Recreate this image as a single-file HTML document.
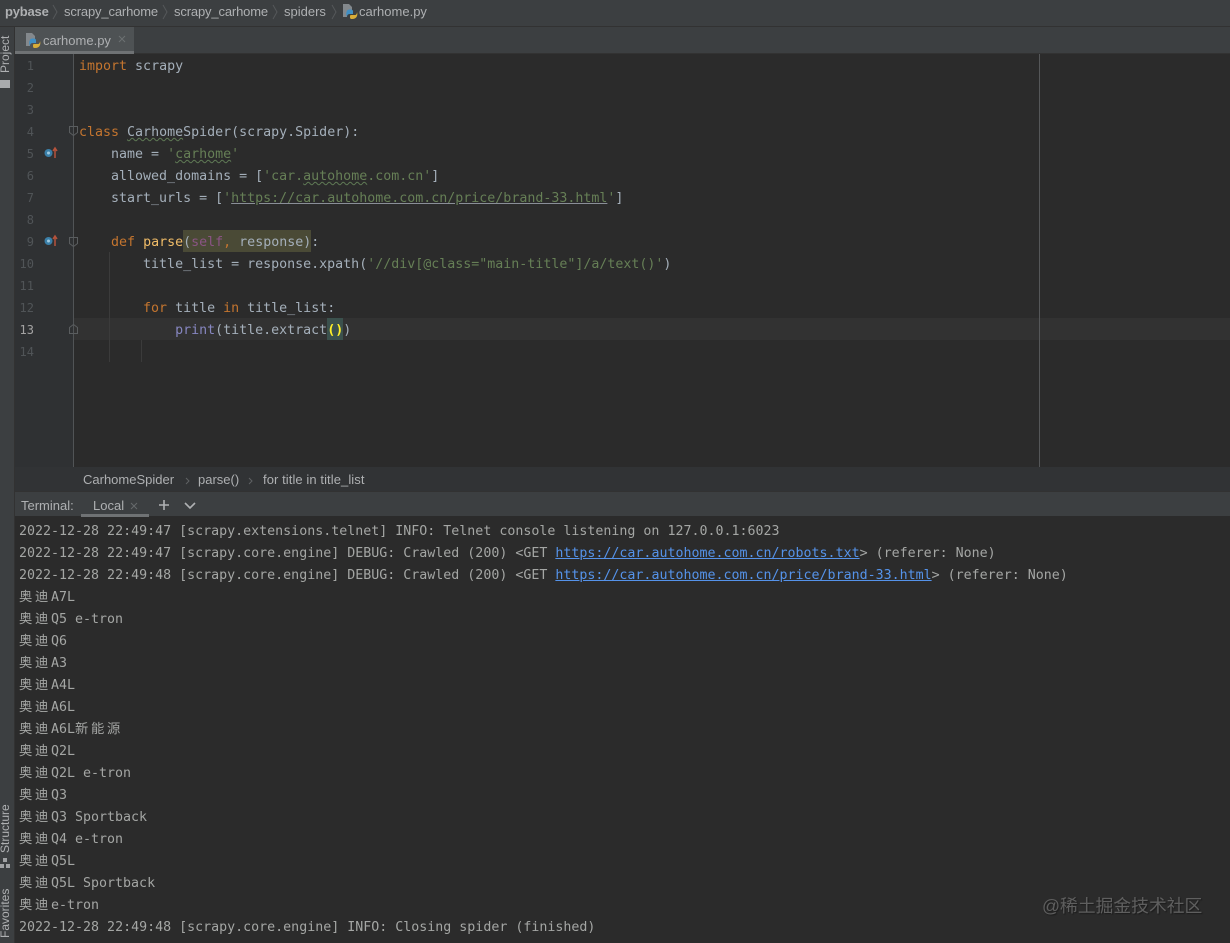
<!DOCTYPE html>
<html lang="zh"><head><meta charset="utf-8"><title>carhome.py</title>
<style>
html,body{margin:0;padding:0;background:#2b2b2b}
#p{position:relative;width:1230px;height:943px;overflow:hidden;background:#2b2b2b;font-family:"Liberation Sans","Noto Sans CJK SC",sans-serif;filter:blur(.3px)}
.a{position:absolute}
.t{position:absolute;font-size:13px;line-height:16px;color:#aeb0b2;white-space:nowrap}
.c,.m{position:absolute;margin-top:2px;font-family:"DejaVu Sans Mono","Noto Sans CJK SC",monospace;font-size:13.3px;line-height:22px;height:22px;white-space:pre;color:#a4afba}
.m{left:19px;color:#a4a6a4}
.n{position:absolute;width:20px;text-align:right;left:14px;font-family:"DejaVu Sans Mono",monospace;font-size:12px;line-height:22px;color:#505457}
.k{color:#c4752f}.s{color:#667f56}.f{color:#f0bc68}.b{color:#8686c0}.g{color:#8a5484}
.u{text-decoration:underline;text-decoration-color:#8a8f98}
.w{text-decoration:underline wavy #5f7a55 1px}
.z{display:inline-block;width:16px;text-align:left}
.l{color:#5593ea;text-decoration:underline}
.v{position:absolute;font-size:12px;color:#aeb0b2;transform:rotate(-90deg);transform-origin:left top;white-space:nowrap;line-height:14px}
</style></head><body><div id="p">
<!-- top nav -->
<div class="a" style="left:0;top:0;width:1230px;height:26px;background:#3c3f41;border-bottom:1px solid #323232"></div>
<div class="t" style="left:5px;top:4px;font-weight:bold;letter-spacing:-.2px">pybase</div>
<div class="t" style="left:64px;top:4px;letter-spacing:-.15px">scrapy_carhome</div>
<div class="t" style="left:174px;top:4px;letter-spacing:-.15px">scrapy_carhome</div>
<div class="t" style="left:284px;top:4px">spiders</div>
<div class="t" style="left:359px;top:4px">carhome.py</div>
<svg class="a" style="left:0;top:0" width="345" height="26" fill="none" stroke="#55585a"><path d="M53 5l4 7-4 7M163 5l4 7-4 7M273 5l4 7-4 7M332 5l4 7-4 7"/></svg>
<svg class="a" style="left:342px;top:3px" width="16" height="17" viewBox="0 0 16 17"><path d="M1 1h6l3 3v4H5v6H1z" fill="#83888c"/><path d="M5 8c0-2 6-2 6 0v3H8c-2 0-3 1-3 3-1-2-1-5 0-6z" fill="#3f8fc4"/><path d="M15 9c1 3 0 7-5 7-2 0-2-1-2-3 0-1 1-1 2-1h3c1 0 2-1 2-3z" fill="#d8ad38"/></svg>
<!-- left strip -->
<div class="a" style="left:0;top:27px;width:14px;height:916px;background:#3c3f41;border-right:1px solid #323232"></div>
<div class="v" style="left:-2px;top:73px;">Project</div>
<div class="a" style="left:0;top:80px;width:10px;height:8px;background:#a9abad"></div>
<div class="v" style="left:-2px;top:853px">Structure</div>
<svg class="a" style="left:0;top:857px" width="10" height="12"><path d="M3 1h4v4H3zM0 7h4v4H0zM6 7h4v4H6z" fill="#a0a2a4"/></svg>
<div class="v" style="left:-2px;top:938px">Favorites</div>
<!-- tabs -->
<div class="a" style="left:15px;top:27px;width:1215px;height:26px;background:#3c3f41;border-bottom:1px solid #323232"></div>
<div class="a" style="left:15px;top:27px;width:119px;height:24px;background:#4e5254;border-bottom:3px solid #6f7274;box-sizing:content-box"></div>
<svg class="a" style="left:25px;top:32px" width="16" height="17" viewBox="0 0 16 17"><path d="M1 1h6l3 3v4H5v6H1z" fill="#83888c"/><path d="M5 8c0-2 6-2 6 0v3H8c-2 0-3 1-3 3-1-2-1-5 0-6z" fill="#3f8fc4"/><path d="M15 9c1 3 0 7-5 7-2 0-2-1-2-3 0-1 1-1 2-1h3c1 0 2-1 2-3z" fill="#d8ad38"/></svg>
<div class="t" style="left:43px;top:33px">carhome.py</div>
<svg class="a" style="left:118px;top:35px" width="8" height="8" stroke="#6c7072"><path d="M1 1l6 6M7 1l-6 6"/></svg>
<!-- gutter -->
<div class="a" style="left:15px;top:54px;width:58px;height:413px;background:#2f3133"></div>
<div class="a" style="left:73px;top:54px;width:1px;height:413px;background:#515456"></div>
<div class="a" style="left:74px;top:318px;width:1156px;height:22px;background:#323232"></div>
<div class="a" style="left:1039px;top:54px;width:1px;height:413px;background:#555759"></div>
<div class="a" style="left:109px;top:252px;width:1px;height:110px;background:#3b3b3b"></div>
<div class="a" style="left:141px;top:340px;width:1px;height:22px;background:#3b3b3b"></div>
<div class="a" style="left:183px;top:230px;width:128px;height:22px;background:#4a4a36"></div>
<div class="a" style="left:327px;top:318px;width:16px;height:22px;background:#3b514d"></div>
<div class="n" style="top:55px">1</div><div class="n" style="top:77px">2</div><div class="n" style="top:99px">3</div><div class="n" style="top:121px">4</div><div class="n" style="top:143px">5</div><div class="n" style="top:165px">6</div><div class="n" style="top:187px">7</div><div class="n" style="top:209px">8</div><div class="n" style="top:231px">9</div><div class="n" style="top:253px">10</div><div class="n" style="top:275px">11</div><div class="n" style="top:297px">12</div><div class="n" style="top:319px;color:#a4a3a3">13</div><div class="n" style="top:341px">14</div>
<svg class="a" style="left:40px;top:140px" width="40" height="205" fill="none">
<circle cx="8.500" cy="13" r="4" fill="#3a7fa8"/><circle cx="8.500" cy="13" r="1.500" fill="#9fc9df"/><path d="M15 9v9M13 11l2-3 2 3" stroke="#b5533c" stroke-width="1.500"/>
<circle cx="8.500" cy="101" r="4" fill="#3a7fa8"/><circle cx="8.500" cy="101" r="1.500" fill="#9fc9df"/><path d="M15 97v9M13 99l2-3 2 3" stroke="#b5533c" stroke-width="1.500"/>
<path d="M29.500 97.500h8v6l-4 3-4-3z" stroke="#5a5d5f"/>
<path d="M29.500 193.500h8v-6l-4-3-4 3z" stroke="#5a5d5f"/>
</svg>
<svg class="a" style="left:69px;top:126px" width="10" height="12" fill="none"><path d="M.5.500h8v6l-4 3-4-3z" stroke="#5a5d5f"/></svg>
<!-- code -->
<div class="c" style="left:79px;top:54px"><span class="k">import</span> scrapy</div>
<div class="c" style="left:79px;top:120px"><span class="k">class</span> <span class="w">Carhome</span>Spider(scrapy.Spider):</div>
<div class="c" style="left:79px;top:142px">    name = <span class="s">'<span class="w">carhome</span>'</span></div>
<div class="c" style="left:79px;top:164px">    allowed_domains = [<span class="s">'car.<span class="w">autohome</span>.com.cn'</span>]</div>
<div class="c" style="left:79px;top:186px">    start_urls = [<span class="s">'<span class="u">https://car.autohome.com.cn/price/brand-33.html</span>'</span>]</div>
<div class="c" style="left:79px;top:230px">    <span class="k">def</span> <span class="f">parse</span>(<span class="g">self</span><span class="k">,</span> response):</div>
<div class="c" style="left:79px;top:252px">        title_list = response.xpath(<span class="s">'//div[@class="main-title"]/a/text()'</span>)</div>
<div class="c" style="left:79px;top:296px">        <span class="k">for</span> title <span class="k">in</span> title_list:</div>
<div class="c" style="left:79px;top:318px">            <span class="b">print</span>(title.extract<span style="color:#ffef28;font-weight:bold">()</span>)</div>
<!-- breadcrumb -->
<div class="a" style="left:15px;top:467px;width:1215px;height:24px;background:#313335"></div>
<div class="t" style="left:83px;top:472px">CarhomeSpider</div>
<div class="t" style="left:198px;top:472px">parse()</div>
<div class="t" style="left:263px;top:472px;letter-spacing:.08px">for title in title_list</div>
<svg class="a" style="left:184px;top:476px" width="70" height="9" fill="none" stroke="#5f6264"><path d="M2 2l3 3-3 3M65 2l3 3-3 3"/></svg>
<!-- terminal bar -->
<div class="a" style="left:15px;top:491px;width:1215px;height:25px;background:#3c3f41;border-top:1px solid #323232;box-sizing:border-box"></div>
<div class="t" style="left:21px;top:498px">Terminal:</div>
<div class="t" style="left:93px;top:498px">Local</div>
<svg class="a" style="left:130px;top:502px" width="8" height="8" stroke="#66696b"><path d="M1 1l6 6M7 1l-6 6"/></svg>
<div class="a" style="left:81px;top:514px;width:68px;height:3px;background:#6f7274"></div>
<svg class="a" style="left:157px;top:498px" width="42" height="15" fill="none" stroke="#afb1b3" stroke-width="1.600"><path d="M7 2v10M2 7h10M28 5l5 5 5-5"/></svg>
<!-- terminal output -->
<div class="m" style="top:519px">2022-12-28 22:49:47 [scrapy.extensions.telnet] INFO: Telnet console listening on 127.0.0.1:6023</div>
<div class="m" style="top:541px">2022-12-28 22:49:47 [scrapy.core.engine] DEBUG: Crawled (200) &lt;GET <span class="l">https://car.autohome.com.cn/robots.txt</span>&gt; (referer: None)</div>
<div class="m" style="top:563px">2022-12-28 22:49:48 [scrapy.core.engine] DEBUG: Crawled (200) &lt;GET <span class="l">https://car.autohome.com.cn/price/brand-33.html</span>&gt; (referer: None)</div>
<div class="m" style="top:585px"><span class="z">奥</span><span class="z">迪</span>A7L</div>
<div class="m" style="top:607px"><span class="z">奥</span><span class="z">迪</span>Q5 e-tron</div>
<div class="m" style="top:629px"><span class="z">奥</span><span class="z">迪</span>Q6</div>
<div class="m" style="top:651px"><span class="z">奥</span><span class="z">迪</span>A3</div>
<div class="m" style="top:673px"><span class="z">奥</span><span class="z">迪</span>A4L</div>
<div class="m" style="top:695px"><span class="z">奥</span><span class="z">迪</span>A6L</div>
<div class="m" style="top:717px"><span class="z">奥</span><span class="z">迪</span>A6L<span class="z">新</span><span class="z">能</span><span class="z">源</span></div>
<div class="m" style="top:739px"><span class="z">奥</span><span class="z">迪</span>Q2L</div>
<div class="m" style="top:761px"><span class="z">奥</span><span class="z">迪</span>Q2L e-tron</div>
<div class="m" style="top:783px"><span class="z">奥</span><span class="z">迪</span>Q3</div>
<div class="m" style="top:805px"><span class="z">奥</span><span class="z">迪</span>Q3 Sportback</div>
<div class="m" style="top:827px"><span class="z">奥</span><span class="z">迪</span>Q4 e-tron</div>
<div class="m" style="top:849px"><span class="z">奥</span><span class="z">迪</span>Q5L</div>
<div class="m" style="top:871px"><span class="z">奥</span><span class="z">迪</span>Q5L Sportback</div>
<div class="m" style="top:893px"><span class="z">奥</span><span class="z">迪</span>e-tron</div>
<div class="m" style="top:915px">2022-12-28 22:49:48 [scrapy.core.engine] INFO: Closing spider (finished)</div>
<div class="m" style="top:937px;color:#777">                    [scrapy.statscollectors] INFO: Dumping Scrapy stats:</div>
<!-- watermark -->
<div class="a" style="left:1042px;top:894px;font-size:17.8px;line-height:24px;color:#5f5f5f;white-space:nowrap;font-family:'Liberation Sans','Noto Sans CJK SC',sans-serif;text-shadow:1px 1px 1px #1c1c1c">@稀土掘金技术社区</div>
</div></body></html>
